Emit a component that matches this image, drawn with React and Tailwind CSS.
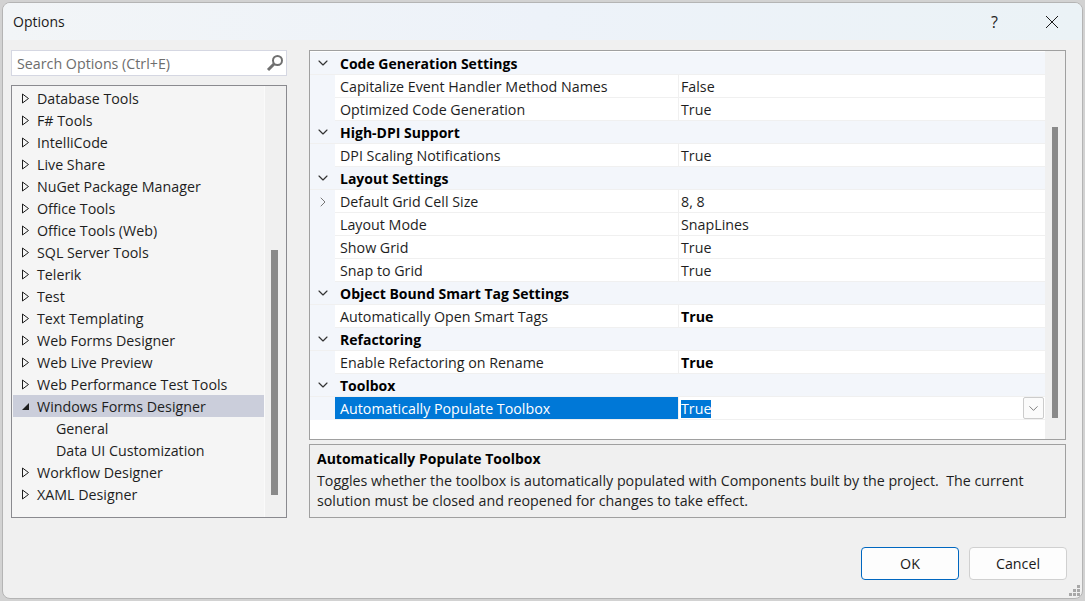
import { ChevronDown, ChevronRight } from 'lucide-react';

const treeItems = [
  { label: 'Database Tools' },
  { label: 'F# Tools' },
  { label: 'IntelliCode' },
  { label: 'Live Share' },
  { label: 'NuGet Package Manager' },
  { label: 'Office Tools' },
  { label: 'Office Tools (Web)' },
  { label: 'SQL Server Tools' },
  { label: 'Telerik' },
  { label: 'Test' },
  { label: 'Text Templating' },
  { label: 'Web Forms Designer' },
  { label: 'Web Live Preview' },
  { label: 'Web Performance Test Tools' },
  { label: 'Windows Forms Designer', open: true },
  { label: 'General', child: true },
  { label: 'Data UI Customization', child: true },
  { label: 'Workflow Designer' },
  { label: 'XAML Designer' },
];

const gridGroups = [
  {
    title: 'Code Generation Settings',
    rows: [
      { name: 'Capitalize Event Handler Method Names', value: 'False' },
      { name: 'Optimized Code Generation', value: 'True' },
    ],
  },
  {
    title: 'High-DPI Support',
    rows: [{ name: 'DPI Scaling Notifications', value: 'True' }],
  },
  {
    title: 'Layout Settings',
    rows: [
      { name: 'Default Grid Cell Size', value: '8, 8', expandable: true },
      { name: 'Layout Mode', value: 'SnapLines' },
      { name: 'Show Grid', value: 'True' },
      { name: 'Snap to Grid', value: 'True' },
    ],
  },
  {
    title: 'Object Bound Smart Tag Settings',
    rows: [{ name: 'Automatically Open Smart Tags', value: 'True', bold: true }],
  },
  {
    title: 'Refactoring',
    rows: [{ name: 'Enable Refactoring on Rename', value: 'True', bold: true }],
  },
  {
    title: 'Toolbox',
    rows: [{ name: 'Automatically Populate Toolbox', value: 'True', selected: true }],
  },
];

const TreeArrow = ({ open }) => (
  <svg width="9" height="11" viewBox="0 0 9 11" className="shrink-0">
    {open ? (
      <path d="M8 2V9H1Z" fill="#1e1e1e" />
    ) : (
      <path d="M1.5 1V10L7.5 5.5Z" fill="none" stroke="#1e1e1e" strokeWidth="1" />
    )}
  </svg>
);

const TreeRow = ({ item }) => (
  <div className={`flex items-center h-[22px] ml-px ${item.open ? 'bg-[#cbcedb]' : ''}`}>
    <div className="w-[8px]" />
    {item.child ? <div className="w-[9px]" /> : <TreeArrow open={item.open} />}
    <span className={`pt-[2px] text-[#1e1e1e] ${item.child ? 'ml-[26px]' : 'ml-[7px]'}`}>{item.label}</span>
  </div>
);

const GridRow = ({ row }) => (
  <div className="flex h-[23px] bg-[#f3f6fb]">
    <div className="flex w-[25px] items-center justify-center shrink-0">
      {row.expandable && <ChevronRight size={16} strokeWidth={1.5} className="text-[#777777]" />}
    </div>
    <div className="flex-1 flex bg-white border-b border-[#f0f0f0]">
      <div className={`w-[343px] h-[22px] pl-[5px] leading-[24px] shrink-0 ${row.selected ? 'bg-[#0078d7] text-white' : 'text-[#1e1e1e]'}`}>
        {row.name}
      </div>
      <div className="flex-1 flex items-center border-l border-[#f0f0f0] pl-[2px] relative">
        <span className={`mt-[2px] ${row.selected ? 'bg-[#0078d7] text-white leading-[18px]' : row.bold ? 'font-bold text-black' : 'text-[#1e1e1e]'}`}>
          {row.value}
        </span>
        {row.selected && (
          <div className="absolute right-px top-[0px] w-[21px] h-[22px] bg-[#fbfbfb] border border-[#cccccc] rounded-[2px] flex items-center justify-center">
            <ChevronDown size={15} strokeWidth={1} className="text-[#333333]" />
          </div>
        )}
      </div>
    </div>
  </div>
);

const GridGroup = ({ group }) => (
  <div>
    <div className="flex h-[23px] items-center bg-[#f3f6fb] border-b border-[#f0f0f0]">
      <div className="flex w-[25px] items-center justify-center shrink-0">
        <ChevronDown size={16} strokeWidth={1.75} className="text-[#333333]" />
      </div>
      <span className="pl-[5px] pt-[2px] text-[14px] font-bold text-black">{group.title}</span>
    </div>
    {group.rows.map((row) => (
      <GridRow key={row.name} row={row} />
    ))}
  </div>
);

export default function App() {
  return (
    <div className="w-[1085px] h-[601px] bg-[#d2d2d2] p-[2px] text-[14.25px] leading-[22px]" style={{ fontFamily: '"Open Sans", "Noto Sans", sans-serif' }}>
      <div className="relative flex flex-col h-full rounded-[8px] overflow-hidden bg-[#f0f0f0] border border-[#b4b4b4]">
        {/* title bar */}
        <div className="flex items-center h-[37px] shrink-0 bg-gradient-to-r from-[#f2f5f7] via-[#edf2f9] to-[#ebf2f6] pl-[10px]">
          <span className="text-[14px] text-[#1a1a1a]">Options</span>
          <span className="ml-auto text-[16px] text-[#222222]">?</span>
          <svg width="14" height="14" viewBox="0 0 14 14" className="ml-[47px] mr-[23px]">
            <path d="M1 1L13 13M13 1L1 13" stroke="#1a1a1a" strokeWidth="1" />
          </svg>
        </div>

        <div className="flex flex-1 pt-[10px] pl-[8px] pr-[16px] gap-[22px]">
          {/* left pane */}
          <div className="w-[276px] shrink-0 flex flex-col gap-[9px]">
            <div className="flex items-center h-[26px] bg-white border border-[#d5d7e2] pl-[5px] pr-[2px]">
              <span className="pt-[2px] text-[#6d6d6d]">Search Options (Ctrl+E)</span>
              <svg width="18" height="18" viewBox="0 0 18 18" className="ml-auto">
                <circle cx="11.5" cy="6.5" r="4.5" fill="none" stroke="#707070" strokeWidth="2" />
                <path d="M8 10L2 16" stroke="#707070" strokeWidth="3" />
              </svg>
            </div>
            <div className="h-[433px] flex border border-[#8a8a8f] bg-[#f5f5f5]">
              <div className="flex-1 pt-px">
                {treeItems.map((item) => (
                  <TreeRow key={item.label} item={item} />
                ))}
              </div>
              <div className="w-[22px] bg-[#f0f0f0] border-l border-[#fafafa] pt-[164px] pl-[6px]">
                <div className="w-[7px] h-[245px] bg-[#8a8a8a]" />
              </div>
            </div>
          </div>

          {/* right pane */}
          <div className="flex-1 flex flex-col gap-[4px]">
            <div className="h-[390px] flex border border-[#a0a0a0] bg-white">
              <div className="flex-1 pt-px">
                {gridGroups.map((group) => (
                  <GridGroup key={group.title} group={group} />
                ))}
              </div>
              <div className="w-[20px] bg-[#f0f0f0] pt-[76px] pl-[7px]">
                <div className="w-[6px] h-[291px] bg-[#8a8a8a]" />
              </div>
            </div>
            <div className="h-[74px] border border-[#a0a0a0] bg-[#f0f0f0] px-[7px] pt-[2px] leading-[20px] text-[#1e1e1e]">
              <div className="font-bold text-[14px] text-black leading-[24px]">Automatically Populate Toolbox</div>
              <div className="whitespace-pre">Toggles whether the toolbox is automatically populated with Components built by the project.  The current</div>
              <div>solution must be closed and reopened for changes to take effect.</div>
            </div>
          </div>
        </div>

        {/* footer */}
        <div className="flex justify-end gap-[10px] pr-[15px] pb-[18px]">
          <button className="w-[98px] h-[33px] rounded-[4px] bg-[#fdfdfd] border border-[#0067c0] text-[#1a1a1a]">OK</button>
          <button className="w-[98px] h-[33px] rounded-[4px] bg-[#fdfdfd] border border-[#d0d0d0] text-[#1a1a1a]">Cancel</button>
        </div>
        <svg width="12" height="12" viewBox="0 0 12 12" className="absolute right-[1px] bottom-[1px]">
          <path d="M8 0h3v3H8zM4 4h3v3H4zM8 4h3v3H8zM0 8h3v3H0zM4 8h3v3H4zM8 8h3v3H8z" fill="#a8a8a8" />
        </svg>
      </div>
    </div>
  );
}
